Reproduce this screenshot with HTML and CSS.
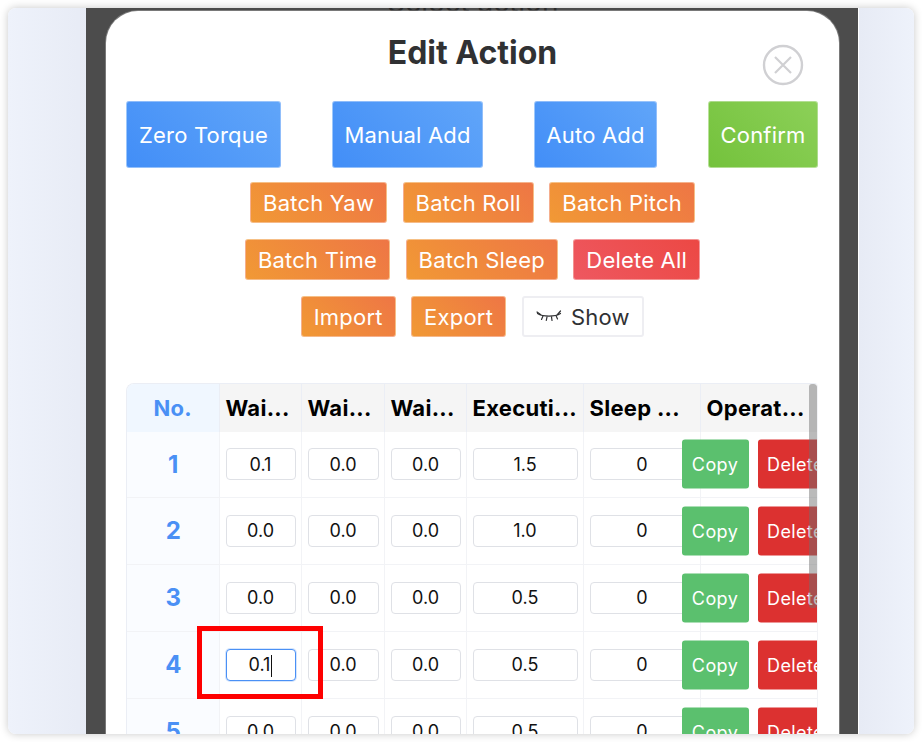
FILE: index.html
```html
<!DOCTYPE html>
<html lang="en">
<head>
    <meta charset="UTF-8">
    <title>Edit Action</title>
    <link rel="stylesheet" href="styles.css">
</head>
<body>

<div class="window">
    <div class="backdrop">
        <div class="page-title">Select action</div>
        <div class="modal">
            <div class="modal-head">
                <h1>Edit Action</h1>
                <svg class="close" width="42" height="42" viewBox="0 0 42 42" fill="none" stroke="#d0d0d3">
                    <circle cx="21" cy="21" r="19" stroke-width="2.4"/>
                    <path d="M13 13L29 29M29 13L13 29" stroke-width="2.2"/>
                </svg>
            </div>

            <div class="top-actions">
                <button class="btn big blue zero">Zero Torque</button>
                <button class="btn big blue manual">Manual Add</button>
                <button class="btn big blue auto">Auto Add</button>
                <button class="btn big green confirm">Confirm</button>
            </div>

            <div class="row-actions">
                <button class="btn orange">Batch Yaw</button>
                <button class="btn orange">Batch Roll</button>
                <button class="btn orange">Batch Pitch</button>
            </div>
            <div class="row-actions">
                <button class="btn orange">Batch Time</button>
                <button class="btn orange">Batch Sleep</button>
                <button class="btn red">Delete All</button>
            </div>
            <div class="row-actions">
                <button class="btn orange">Import</button>
                <button class="btn orange">Export</button>
                <button class="btn plain">
                    <svg width="26" height="14" viewBox="0 0 26 14" fill="none" stroke="#303133" stroke-width="1.2" stroke-linecap="round">
                        <path d="M1.5 3.5C7 7 19 7 24.5 3.5"/>
                        <path d="M1 2L4.5 4.5M24.5 1L21.5 4.5M7 6L5.5 9.5M11 6.8L10.3 10.5M15.5 6.8L16 10.5M20 5.5L21.5 9"/>
                    </svg>
                    Show
                </button>
            </div>

            <div class="table-wrap">
                <div class="scrollbar"></div>
                <table>
                    <thead>
                        <tr>
                            <th class="no">No.</th>
                            <th>Wai...</th>
                            <th>Wai...</th>
                            <th>Wai...</th>
                            <th>Executi...</th>
                            <th>Sleep ...</th>
                            <th>Operat...</th>
                        </tr>
                    </thead>
                    <tbody>
                        <tr>
                            <td class="no">1</td>
                            <td><input class="field" value="0.1"></td>
                            <td><input class="field" value="0.0"></td>
                            <td><input class="field" value="0.0"></td>
                            <td><input class="field" value="1.5"></td>
                            <td><input class="field" value="0"></td>
                            <td class="ops"><div class="ops-inner"><button class="op copy">Copy</button><button class="op delete">Delete</button></div></td>
                        </tr>
                        <tr>
                            <td class="no">2</td>
                            <td><input class="field" value="0.0"></td>
                            <td><input class="field" value="0.0"></td>
                            <td><input class="field" value="0.0"></td>
                            <td><input class="field" value="1.0"></td>
                            <td><input class="field" value="0"></td>
                            <td class="ops"><div class="ops-inner"><button class="op copy">Copy</button><button class="op delete">Delete</button></div></td>
                        </tr>
                        <tr>
                            <td class="no">3</td>
                            <td><input class="field" value="0.0"></td>
                            <td><input class="field" value="0.0"></td>
                            <td><input class="field" value="0.0"></td>
                            <td><input class="field" value="0.5"></td>
                            <td><input class="field" value="0"></td>
                            <td class="ops"><div class="ops-inner"><button class="op copy">Copy</button><button class="op delete">Delete</button></div></td>
                        </tr>
                        <tr>
                            <td class="no">4</td>
                            <td class="marked">
                                <div class="field focused">0.1<span class="caret"></span></div>
                                <div class="red-box"></div>
                            </td>
                            <td><input class="field" value="0.0"></td>
                            <td><input class="field" value="0.0"></td>
                            <td><input class="field" value="0.5"></td>
                            <td><input class="field" value="0"></td>
                            <td class="ops"><div class="ops-inner"><button class="op copy">Copy</button><button class="op delete">Delete</button></div></td>
                        </tr>
                        <tr>
                            <td class="no">5</td>
                            <td><input class="field" value="0.0"></td>
                            <td><input class="field" value="0.0"></td>
                            <td><input class="field" value="0.0"></td>
                            <td><input class="field" value="0.5"></td>
                            <td><input class="field" value="0"></td>
                            <td class="ops"><div class="ops-inner"><button class="op copy">Copy</button><button class="op delete">Delete</button></div></td>
                        </tr>
                    </tbody>
                </table>
            </div>
        </div>
    </div>
</div>

</body>
</html>
```

FILE: styles.css
```css
* {
    box-sizing: border-box;
}
html, body {
    height: 100%;
}
body {
    margin: 0;
    padding: 8px;
    background-color: #fff;
    font-family: Inter, "Liberation Sans", sans-serif;
    overflow: hidden;
}
.window {
    height: 726px;
    width: 906px;
    padding: 0 55px 0 78px;
    background: linear-gradient(90deg, #eef2fb, #e7ebf5 9%, #e7ebf5 94%, #eef2fb);
    border-radius: 8px;
    box-shadow: 0 0 8px rgba(0, 0, 0, 0.22);
    overflow: hidden;
}
.backdrop {
    position: relative;
    height: 100%;
    padding: 3px 19px 0 20px;
    background-color: #4c4c4c;
    border-right: 1px solid #fff;
    overflow: hidden;
}
.page-title {
    position: absolute;
    top: -23px;
    left: 301px;
    color: #2a2a2a;
    font-size: 28px;
}
.modal {
    position: relative;
    height: 760px;
    width: 733px;
    padding: 24px 20px 0;
    background-color: #fff;
    border-radius: 32px;
    box-shadow: 0 0 0 1px rgba(255, 255, 255, 0.25);
}
.modal-head {
    position: relative;
    height: 66px;
}
h1 {
    margin: 0;
    color: #303133;
    font-size: 32px;
    font-weight: 700;
    line-height: 36px;
    text-align: center;
}
.close {
    position: absolute;
    top: 9px;
    right: 15px;
}
.btn {
    height: 41px;
    padding: 0 12px;
    border: 1px solid rgba(255, 255, 255, 0.4);
    border-radius: 3px;
    color: #fff;
    font-family: inherit;
    font-size: 22px;
    letter-spacing: 0.2px;
    cursor: pointer;
}
.big {
    height: 67px;
    padding: 1px 0 0;
}
.blue {
    background: linear-gradient(45deg, #428ef7, #60a5f9);
}
.green {
    background: linear-gradient(45deg, #74c23c, #8cd058);
}
.orange {
    background: linear-gradient(45deg, #f19935, #ee7645);
}
.red {
    background: linear-gradient(45deg, #ee5860, #ec4844);
}
.plain {
    display: flex;
    align-items: center;
    gap: 9px;
    padding: 0 12.5px;
    background: #fff;
    border: 2px solid #eeeef2;
    color: #303133;
}
.top-actions {
    display: flex;
    justify-content: space-between;
    margin-right: 1px;
}
.zero { width: 155px; }
.manual { width: 151px; }
.auto { width: 123px; }
.confirm { width: 110px; }
.row-actions {
    display: flex;
    justify-content: center;
    gap: 15.5px;
    margin-top: 16px;
}
.top-actions + .row-actions {
    margin-top: 14px;
}
.table-wrap {
    position: relative;
    width: 692px;
    margin-top: 46px;
    border-top: 1px solid #ebeef5;
    border-left: 1px solid #ebeef5;
    border-right: 1px solid #f2f3f6;
    border-radius: 8px 4px 0 0;
    overflow: hidden;
}
.scrollbar {
    position: absolute;
    top: 0;
    right: 0;
    z-index: 3;
    width: 8px;
    height: 224px;
    background-color: rgba(110, 110, 110, 0.48);
    border-radius: 3px;
}
table {
    width: 692px;
    border-collapse: collapse;
    table-layout: fixed;
}
th {
    height: 48px;
    padding: 0 6px;
    background-color: #f5f5f5;
    border-right: 1px solid #ebeef5;
    color: #000;
    font-size: 22px;
    font-weight: 700;
    letter-spacing: 0.3px;
    text-align: left;
    white-space: nowrap;
}
th:nth-child(1) { width: 92px; }
th:nth-child(2) { width: 82px; }
th:nth-child(3) { width: 83px; }
th:nth-child(4) { width: 82px; }
th:nth-child(5) { width: 117px; }
th:nth-child(6) { width: 117px; }
th:last-child {
    border-right: none;
}
th.no {
    background-color: #f0f7ff;
    color: #4a90f5;
    text-align: center;
}
td {
    height: 67px;
    padding: 0 5px 0 6px;
    border-right: 1px solid #f2f3f6;
    border-bottom: 1px solid #f2f3f6;
    text-align: center;
}
tbody tr:first-child td {
    height: 65px;
}
td.no {
    background-color: #fafcff;
    color: #4a90f5;
    font-size: 24px;
    font-weight: 700;
}
.field {
    display: block;
    width: 100%;
    height: 32px;
    padding: 0;
    background: #fff;
    border: 1px solid #dfe1e6;
    border-radius: 4px;
    color: #111;
    font-family: inherit;
    font-size: 18px;
    line-height: 30px;
    text-align: center;
    outline: none;
}
.focused {
    border-color: #4a90f5;
    box-shadow: 0 0 0 1px #d6e6fd;
}
.caret {
    display: inline-block;
    width: 1px;
    height: 22px;
    margin-left: 1px;
    background-color: #111;
    vertical-align: middle;
}
.marked {
    position: relative;
}
.red-box {
    position: absolute;
    top: -6px;
    left: -23px;
    z-index: 2;
    width: 126px;
    height: 73px;
    border: 5.5px solid #fe0000;
}
.ops {
    position: relative;
    border-right: none;
}
.ops-inner {
    position: absolute;
    top: 50%;
    left: -19px;
    display: flex;
    gap: 9px;
    transform: translateY(-50%);
}
.op {
    flex-shrink: 0;
    width: 67px;
    height: 49px;
    padding: 0;
    border: none;
    border-radius: 3px;
    color: #fff;
    font-family: inherit;
    font-size: 18px;
    letter-spacing: 0.4px;
}
.copy {
    background-color: #5bc06e;
}
.delete {
    width: 76px;
    background-color: #dc3130;
}
```
